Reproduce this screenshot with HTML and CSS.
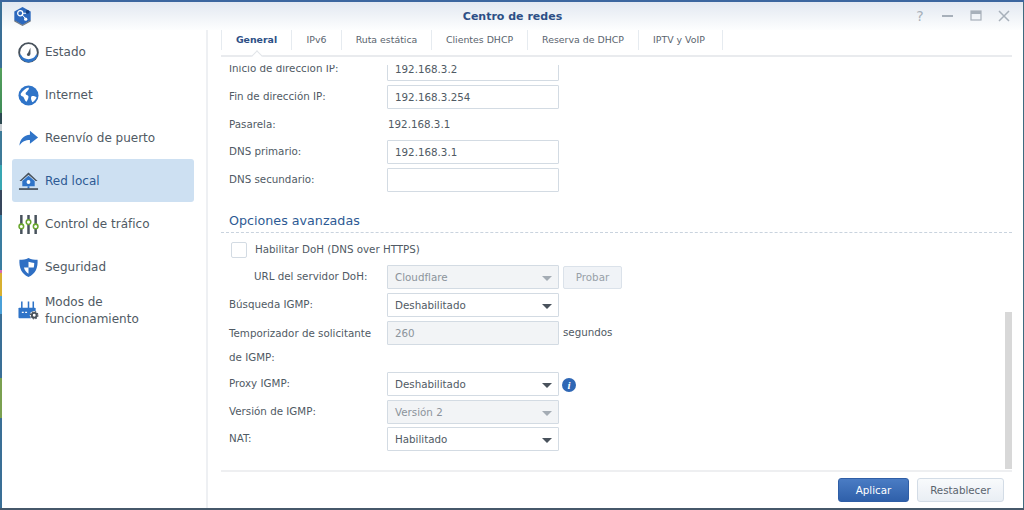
FILE: index.html
```html
<!DOCTYPE html>
<html lang="es">
<head>
<meta charset="utf-8">
<title>Centro de redes</title>
<link rel="stylesheet" href="styles.css">
</head>
<body>
<div class="window">
  <header class="titlebar">
    <svg class="logo" viewBox="0 0 20 22" width="19" height="20">
      <path d="M10 1l9 5v10l-9 5-9-5V6z" fill="#2c68bd"/>
      <path d="M1 15.500l9 5 9-5V17l-9 5-9-5z" fill="#6f7882"/>
      <circle cx="7.500" cy="8" r="2.800" fill="none" stroke="#fff" stroke-width="1.400"/>
      <path d="M9.500 9.500l3.500 4M10 8h4" stroke="#fff" stroke-width="1.100"/>
      <circle cx="15.500" cy="6.500" r="2" fill="#17407f"/>
      <circle cx="13.500" cy="14.500" r="1.800" fill="#fff"/>
    </svg>
    <h1 class="title">Centro de redes</h1>
    <div class="winbtns">
      <span class="help">?</span>
      <svg viewBox="0 0 12 12" width="12" height="12"><rect x="0" y="5" width="11" height="2" fill="#a7b0ba"/></svg>
      <svg viewBox="0 0 12 12" width="12" height="12"><rect x="1" y="1" width="10" height="9" fill="none" stroke="#a7b0ba" stroke-width="1.200"/><rect x="1" y="1" width="10" height="3" fill="#a7b0ba"/></svg>
      <svg viewBox="0 0 12 12" width="12" height="12"><path d="M1 1l10 10M11 1L1 11" stroke="#a7b0ba" stroke-width="1.500"/></svg>
    </div>
  </header>
  <div class="main">
    <nav class="sidebar">
      <a class="nav-item">
        <svg class="nav-icon" viewBox="0 0 22 22"><circle cx="11" cy="11" r="9.800" fill="#fff" stroke="#48525c" stroke-width="2"/><path d="M2.200 13.500a9 9 0 0 0 17.600 0 10 10 0 0 1-17.600 0z" fill="#2f74c8" stroke="#2f74c8" stroke-width="1.600"/><path d="M10 12.500l3-6.500 0 7z" fill="#48525c"/><circle cx="11" cy="13" r="1.600" fill="#48525c"/></svg>
        <span>Estado</span>
      </a>
      <a class="nav-item">
        <svg class="nav-icon" viewBox="0 0 22 22"><circle cx="11" cy="11" r="10.500" fill="#2f74c8"/><path d="M3 9c2-3 5-6 8-6.500 1 1 0 2.500-1 3.500-1 2-2 1-2 3s2 1 3 3c0 2-1 4-2 5.500-2-1-2-3-3-4.500S2 12 3 9zM14 12c2-1 4 0 5.500 1-1 2-2.500 4-4.500 5-1-2-2-4-1-6z" fill="#fff"/></svg>
        <span>Internet</span>
      </a>
      <a class="nav-item">
        <svg class="nav-icon" viewBox="0 0 22 22"><path d="M12.500 3l8.500 7-8.500 6.500V12.500C8 12.500 4 14 1.500 18.500 2 11.500 6 7.500 12.500 7z" fill="#2f74c8"/></svg>
        <span>Reenvío de puerto</span>
      </a>
      <a class="nav-item is-active">
        <svg class="nav-icon" viewBox="0 0 22 22"><path d="M11 1.500L1.500 10.500h2L11 4l7.500 6.500h2z" fill="#48525c"/><path d="M4.500 10.500L11 5l6.500 5.500v5.500h-13z" fill="#2f74c8"/><circle cx="11" cy="11.500" r="2" fill="#fff"/><path d="M10 16h2v2.500h-2z" fill="#2f74c8"/><rect x="1" y="18" width="20" height="1.800" fill="#48525c"/></svg>
        <span>Red local</span>
      </a>
      <a class="nav-item">
        <svg class="nav-icon" viewBox="0 0 22 22"><path d="M3.500 1v20M11 1v20M18.500 1v20" stroke="#48525c" stroke-width="2.600"/><circle cx="3.500" cy="13" r="2.400" fill="#fff" stroke="#6aa82e" stroke-width="1.600"/><circle cx="11" cy="8.500" r="2.400" fill="#fff" stroke="#6aa82e" stroke-width="1.600"/><circle cx="18.500" cy="13" r="2.400" fill="#fff" stroke="#6aa82e" stroke-width="1.600"/></svg>
        <span>Control de tráfico</span>
      </a>
      <a class="nav-item">
        <svg class="nav-icon" viewBox="0 0 22 22"><path d="M11 1c3 1.500 6 2 9.500 2 .5 8-2 15-9.500 18C3.500 18 1 11 1.500 3 5 3 8 2.500 11 1z" fill="#2f6fc4"/><path d="M11 5c2 .8 4 1.200 6 1.300 0 1.600-.1 3.200-.5 4.700H11zM11 11v6.500c-2.500-1.300-4-3.800-4.800-6.500z" fill="#fff"/></svg>
        <span>Seguridad</span>
      </a>
      <a class="nav-item">
        <svg class="nav-icon" viewBox="0 0 22 22"><path d="M4 1.500v7M11 1.500v7M16 1.500v7" stroke="#2f74c8" stroke-width="1.600"/><rect x="0.500" y="8" width="18" height="11" rx="1" fill="#2f74c8"/><path d="M4 13h2M7.500 13h2" stroke="#fff" stroke-width="1.400"/><circle cx="17" cy="16" r="4.600" fill="#fff"/><circle cx="17" cy="16" r="2.500" fill="none" stroke="#48525c" stroke-width="2"/><circle cx="17" cy="16" r="3.800" fill="none" stroke="#48525c" stroke-width="1.300" stroke-dasharray="1.500 1.500"/></svg>
        <span>Modos de<br>funcionamiento</span>
      </a>
    </nav>
    <section class="content">
      <div class="tabs">
        <a class="tab tab-1 is-current">General</a>
        <a class="tab tab-2">IPv6</a>
        <a class="tab tab-3">Ruta estática</a>
        <a class="tab tab-4">Clientes DHCP</a>
        <a class="tab tab-5">Reserva de DHCP</a>
        <a class="tab tab-6">IPTV y VoIP</a>
      </div>
      <div class="panel">
        <div class="scroll">
          <div class="form">
            <div class="row"><label class="lbl">Inicio de dirección IP:</label><div class="field">192.168.3.2</div></div>
            <div class="row"><label class="lbl">Fin de dirección IP:</label><div class="field">192.168.3.254</div></div>
            <div class="row row-text"><label class="lbl">Pasarela:</label><span class="value">192.168.3.1</span></div>
            <div class="row"><label class="lbl">DNS primario:</label><div class="field">192.168.3.1</div></div>
            <div class="row"><label class="lbl">DNS secundario:</label><div class="field"></div></div>
            <h2 class="section">Opciones avanzadas</h2>
            <div class="row row-check"><span class="check"></span><span class="check-text">Habilitar DoH (DNS over HTTPS)</span></div>
            <div class="row"><label class="lbl lbl-sub">URL del servidor DoH:</label><div class="field select is-off">Cloudflare</div><button class="btn-test">Probar</button></div>
            <div class="row"><label class="lbl">Búsqueda IGMP:</label><div class="field select">Deshabilitado</div></div>
            <div class="row row-tall"><label class="lbl lbl-wrap">Temporizador de solicitante de IGMP:</label><div class="field is-off">260</div><span class="unit">segundos</span></div>
            <div class="row"><label class="lbl">Proxy IGMP:</label><div class="field select">Deshabilitado</div><span class="info">i</span></div>
            <div class="row row-tight"><label class="lbl">Versión de IGMP:</label><div class="field select is-off">Versión 2</div></div>
            <div class="row"><label class="lbl">NAT:</label><div class="field select">Habilitado</div></div>
          </div>
        </div>
        <div class="scrollbar"></div>
      </div>
      <footer class="footer">
        <button class="btn btn-primary">Aplicar</button>
        <button class="btn btn-default">Restablecer</button>
      </footer>
    </section>
  </div>
</div>
</body>
</html>
```
FILE: styles.css
```css
* { box-sizing: border-box; }
html, body { margin: 0; height: 100%; }
body {
  width: 1024px;
  height: 510px;
  overflow: hidden;
  padding: 2px 1px 2px 2px;
  font-family: "DejaVu Sans", sans-serif;
  font-size: 10.3px;
  color: #505a64;
  background:
    linear-gradient(#3c669f, #3c669f) top/100% 2px no-repeat,
    linear-gradient(#46586a, #46586a) bottom/100% 2px no-repeat,
    linear-gradient(#3f6b80, #3f6b80) right/1px 100% no-repeat,
    linear-gradient(180deg,
      #3a6f96 0, #3a6f96 68px, #55a05c 68px, #3f8c58 113px, #2c4a52 113px, #2c4a52 124px,
      #c9ced2 124px, #c9ced2 131px, #3d7a98 131px, #3d7a98 165px, #38a6b2 165px, #38a6b2 190px,
      #36465c 190px, #36465c 215px, #3a7da0 215px, #3a7da0 270px, #d46ab0 270px, #d46ab0 273px,
      #d8b030 273px, #d8b030 296px, #4aa0d8 296px, #4aa0d8 314px, #3a6f96 314px, #3a6f96 378px,
      #7aa050 378px, #7aa050 418px, #3a6f96 418px, #3a6f96 100%);
}
.window {
  width: 1021px;
  height: 506px;
  display: flex;
  flex-direction: column;
  background: #fff;
}
.titlebar {
  height: 28px;
  flex: none;
  display: grid;
  grid-template-columns: 1fr auto 1fr;
  align-items: center;
  padding: 0 13px 0 11px;
  background: linear-gradient(180deg, #e2e8f1, #fdfefe);
}
.logo { display: block; }
.title {
  margin: 0;
  padding-left: 2px;
  text-align: center;
  font-size: 11px;
  font-weight: 700;
  color: #2d4f86;
}
.winbtns {
  display: flex;
  align-items: center;
  justify-content: flex-end;
  gap: 16px;
}
.help { width: 12px; font-size: 14px; line-height: 14px; color: #a7b0ba; text-align: center; }
.main { flex: 1; display: flex; min-height: 0; }
.sidebar {
  width: 206px;
  flex: none;
  padding: 0 12px 0 10px;
  border-right: 2px solid #eef0f3;
}
.nav-item {
  height: 43px;
  display: flex;
  align-items: center;
  padding: 2px 0 0 6px;
  gap: 6px;
  font-size: 12px;
  line-height: 17px;
  color: #505a64;
  border-radius: 3px;
}
.nav-item.is-active { background: #cde0f2; color: #2d5a94; }
.nav-icon { width: 21px; height: 21px; flex: none; }
.content {
  flex: 1;
  min-width: 0;
  display: flex;
  flex-direction: column;
  padding: 0 11px 0 13px;
}
.tabs {
  height: 27px;
  flex: none;
  display: flex;
  align-items: flex-start;
  border-bottom: 2px solid #e9ebee;
}
.tab {
  height: 20px;
  line-height: 20px;
  text-align: center;
  border-left: 1px solid #e6ebf0;
  font-size: 9.4px;
  color: #5a646e;
}
.tab-1 { width: 70px; }
.tab-2 { width: 50px; }
.tab-3 { width: 90px; }
.tab-4 { width: 96px; }
.tab-5 { width: 111px; }
.tab-6 { width: 85px; padding-right: 3px; border-right: 1px solid #e6ebf0; }
.tab.is-current { font-weight: 700; color: #2d4f86; position: relative; }
.tab.is-current::after {
  content: "";
  position: absolute;
  left: 31px;
  top: 22px;
  width: 7px;
  height: 7px;
  transform: rotate(45deg);
  background: #fff;
  border-left: 1px solid #e2e5e9;
  border-top: 1px solid #e2e5e9;
}
.panel { flex: 1; position: relative; min-height: 0; padding-top: 8px; }
.scroll { height: 404px; overflow: hidden; }
.form { margin-top: -8px; }
.row {
  height: 24px;
  display: flex;
  align-items: center;
  margin-bottom: 4px;
  padding-left: 8px;
}
.row-tight { margin-bottom: 3px; }
.row-text { height: 23px; }
.lbl { width: 158px; flex: none; margin-top: -2px; }
.lbl-sub { padding-left: 25px; }
.lbl-wrap { line-height: 24px; align-self: flex-start; margin-top: 0; padding-right: 8px; }
.row-tall { height: 47px; align-items: flex-start; }
.field {
  width: 172px;
  height: 24px;
  line-height: 22px;
  border: 1px solid #d3dbe3;
  border-radius: 1px;
  padding-left: 7px;
  background: #fff;
  color: #505a64;
  position: relative;
  flex: none;
}
.field.is-off { background: #f2f4f6; color: #8b939b; }
.select::after {
  content: "";
  position: absolute;
  right: 6px;
  top: 10px;
  border-left: 5px solid transparent;
  border-right: 5px solid transparent;
  border-top: 5px solid #49525c;
}
.select.is-off::after { border-top-color: #a4acb4; }
.value { padding-left: 1px; margin-top: -1px; }
.unit { margin-left: 4px; line-height: 22px; }
.section {
  margin: 19px 0 0;
  padding: 0 0 0 8px;
  height: 22px;
  line-height: 20px;
  font-size: 12.7px;
  font-weight: 400;
  color: #2d5a94;
  border-bottom: 1px dashed #c9d3de;
}
.row-check { margin-top: 5px; margin-bottom: 3px; }
.check {
  width: 16px;
  height: 16px;
  margin-left: 2px;
  margin-right: 8px;
  border: 1px solid #d3dbe3;
  border-radius: 2px;
  background: #fff;
}
.check-text { margin-top: -2px; }
.btn-test {
  width: 59px;
  height: 23px;
  margin-left: 4px;
  padding: 0;
  border: 1px solid #dbe2ea;
  border-radius: 2px;
  background: #f0f3f7;
  font: inherit;
  color: #98a0a8;
}
.info {
  width: 14px;
  height: 14px;
  margin-left: 3px;
  margin-top: 2px;
  border-radius: 50%;
  background: #2f67b5;
  color: #fff;
  text-align: center;
  font: italic 700 11px/14px "Liberation Serif", serif;
}
.scrollbar {
  position: absolute;
  right: 0;
  bottom: 1px;
  width: 7px;
  height: 157px;
  background: #d8d8d8;
}
.footer {
  height: 38px;
  flex: none;
  display: flex;
  justify-content: flex-end;
  gap: 8px;
  padding: 6px 8px 0 0;
  border-top: 2px solid #eeeff1;
}
.btn {
  height: 24px;
  padding: 0;
  border-radius: 3px;
  font: inherit;
}
.btn-primary {
  width: 71px;
  color: #fff;
  border: 1px solid #2f5ea6;
  background: linear-gradient(180deg, #4a7cc4, #2f60aa);
}
.btn-default {
  width: 87px;
  color: #5a646e;
  border: 1px solid #d3dce6;
  background: linear-gradient(180deg, #f8fafc, #e9eef4);
}
```
